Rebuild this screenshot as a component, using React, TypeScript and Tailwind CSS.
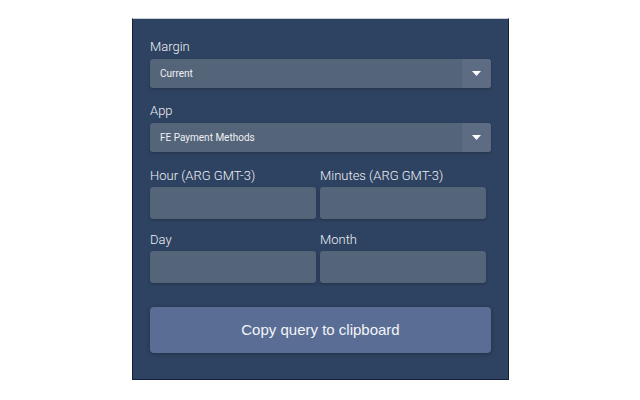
import React from 'react';

function Label({ children }: { children: React.ReactNode }) {
    return (
        <div className="text-[13px] leading-[16px] font-light text-[#eef1f6] [font-family:Roboto,'Liberation_Sans',sans-serif]">
            {children}
        </div>
    );
}

function Select({ value }: { value: string }) {
    return (
        <div className="flex h-[29px] rounded-[3px] bg-[#546479] shadow-[0_1px_3px_rgba(0,0,0,0.25)] overflow-hidden">
            <div className="flex-1 flex items-center pl-[10px] text-[10px] text-[#eef1f5] [font-family:Roboto,'Liberation_Sans',sans-serif]">
                {value}
            </div>
            <div className="w-[29px] flex items-center justify-center bg-[#5d6c82]">
                <svg width="9" height="5" viewBox="0 0 9 5">
                    <path d="M0 0 H9 L4.5 5 Z" fill="#ffffff" />
                </svg>
            </div>
        </div>
    );
}

function Field({ label }: { label: string }) {
    return (
        <div className="flex flex-col">
            <Label>{label}</Label>
            <div className="mt-[3px] h-[32px] rounded-[3px] bg-[#546479] shadow-[0_1px_3px_rgba(0,0,0,0.25)]" />
        </div>
    );
}

export default function App() {
    return (
        <div className="w-[640px] h-[400px] bg-white pt-[18px] pl-[132px]">
            <div className="w-[377px] h-[362px] bg-[#2e4261] border-x border-b border-[#14203a] border-t border-t-[#c9cdd4] px-[17px] pt-[20px]">
                <Label>Margin</Label>
                <div className="mt-[4px]">
                    <Select value="Current" />
                </div>

                <div className="mt-[15px]">
                    <Label>App</Label>
                </div>
                <div className="mt-[4px]">
                    <Select value="FE Payment Methods" />
                </div>

                <div className="mt-[16px] grid grid-cols-2 gap-x-[4px] w-[336px]">
                    <Field label="Hour (ARG GMT-3)" />
                    <Field label="Minutes (ARG GMT-3)" />
                </div>

                <div className="mt-[13px] grid grid-cols-2 gap-x-[4px] w-[336px]">
                    <Field label="Day" />
                    <Field label="Month" />
                </div>

                <button className="mt-[24px] w-full h-[46px] rounded-[4px] bg-[#5a6d95] shadow-[0_1px_4px_rgba(0,0,0,0.3)] text-[15px] text-[#f3f5f9] [font-family:'Liberation_Sans',Arial,sans-serif]">
                    Copy query to clipboard
                </button>
            </div>
        </div>
    );
}
